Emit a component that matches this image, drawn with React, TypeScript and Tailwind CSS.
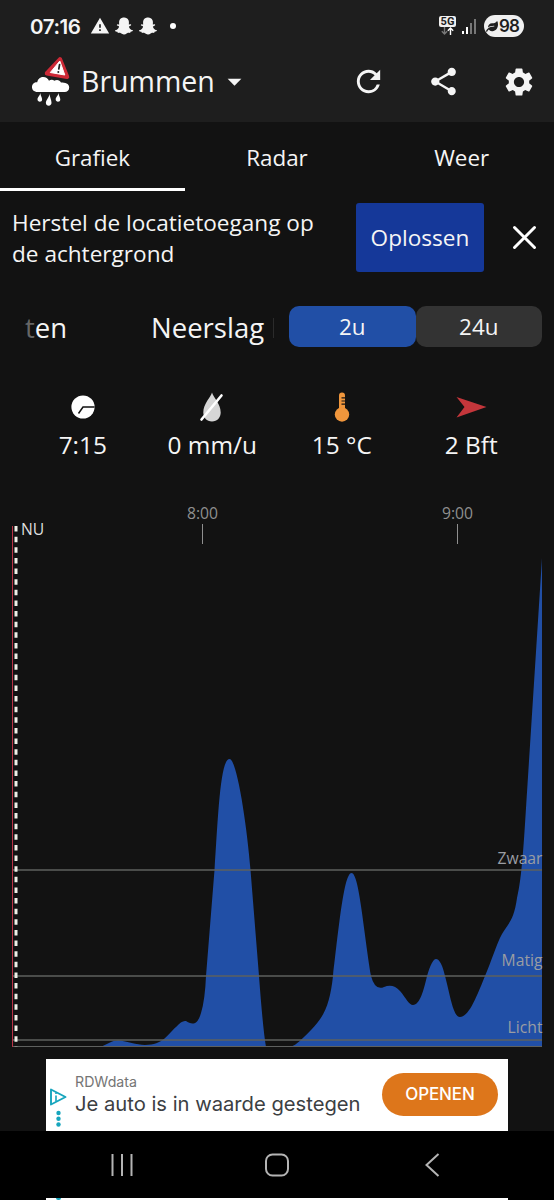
import { MdArrowDropDown, MdRefresh, MdSettings, MdShare, MdWarning } from 'react-icons/md';
import { FaLeaf, FaSnapchatGhost } from 'react-icons/fa';

const tabs = ['Grafiek', 'Radar', 'Weer'];

const levels = [
  { label: 'Zwaar', y: 870, textY: 864 },
  { label: 'Matig', y: 976, textY: 966 },
  { label: 'Licht', y: 1040, textY: 1033 },
];

const hours = [
  { label: '8:00', x: 202.5 },
  { label: '9:00', x: 457.5 },
];

function StatusBar() {
  return (
    <div className="flex h-[52px] items-center justify-between px-[30px]">
      <div className="flex items-center">
        <span className="w-[60px] pt-[2px] font-['Inter'] text-[20.5px] font-semibold leading-none tracking-[-0.4px]">07:16</span>
        <MdWarning className="h-5 w-5" />
        <FaSnapchatGhost className="ml-[5px] h-[18px] w-[18px]" />
        <FaSnapchatGhost className="ml-[6px] h-[18px] w-[18px]" />
        <span className="ml-[13px] h-1.5 w-1.5 rounded-full bg-white" />
      </div>
      <div className="flex items-center">
        <div className="-mt-[2px] flex w-[17px] flex-col items-center">
          <span className="flex h-[11px] w-[17px] items-center justify-center rounded-[2px] bg-[#f0f0f0] font-['Roboto'] text-[11px] font-bold leading-none text-[#1e1e1e]">5G</span>
          <svg className="h-2 w-[13px]" viewBox="0 0 13 8" fill="none" strokeWidth="1.4">
            <path d="M3.500 0v7M.8 4.300l2.700 2.700 2.700-2.700" stroke="#777" />
            <path d="M9.500 8V1M6.800 3.700 9.500 1l2.700 2.700" stroke="#fff" />
          </svg>
        </div>
        <svg className="ml-[6px] h-4 w-[16px]" viewBox="0 0 16 16">
          <rect x="0" y="13" width="2" height="3" fill="#fff" />
          <rect x="4" y="9" width="2" height="7" fill="#fff" />
          <rect x="8" y="5" width="2" height="11" fill="#777" />
          <rect x="12" y="1" width="2" height="15" fill="#777" />
        </svg>
        <div className="ml-[6px] flex h-[22px] w-[40px] items-center rounded-full bg-[#f0f0f0] pl-[2px] text-[#1e1e1e]">
          <FaLeaf className="h-[11px] w-[12px]" />
          <span className="ml-[1px] font-['Inter'] text-[17px] font-semibold leading-none tracking-[-0.8px]">98</span>
        </div>
      </div>
    </div>
  );
}

function RainWarningIcon() {
  return (
    <svg className="h-[52px] w-[40px]" viewBox="0 0 40 52">
      <path
        d="M8 36C3.500 36 2 33.500 2 31c0-3 2.400-5 5.200-4.800C8 22.500 10.600 21 13.200 21c2.700 0 4.800 1.500 5.800 3.800 1.500-1.300 4-1.300 5.300 0 2.300-1.600 5.500-1 6.700 1.800 4 .2 8.200.8 8.200 4.900 0 2.800-2 4.500-4.500 4.500Z"
        fill="#fff"
      />
      <path d="M10.300 37c-.4 3-3 4.300-2.800 6.600.1 1.300 1 2.100 2.300 2.100s2.300-1 2.300-2.300c0-2-1.500-3.600-1.800-6.400ZM19.500 38c-.6 4-3.800 6-3.600 9 .1 1.700 1.300 2.700 2.800 2.700 1.700 0 2.800-1.200 2.800-2.900 0-3-1.500-5-2-8.800ZM28.500 37c-.4 3-3 4.300-2.800 6.600.1 1.300 1 2.100 2.300 2.100s2.300-1 2.300-2.300c0-2-1.500-3.600-1.800-6.400Z" fill="#fff" />
      <path d="m30 3.500 7 17.300-20-3.500Z" fill="#cc2936" stroke="#cc2936" strokeWidth="4.500" strokeLinejoin="round" />
      <path d="m29.800 5 5 14-14.500-2.500Z" fill="#fff" stroke="#fff" strokeWidth="1" strokeLinejoin="round" />
      <path d="m29.600 8.500-.8 4.500" stroke="#222" strokeWidth="1.700" strokeLinecap="round" />
      <circle cx="28.300" cy="16" r="1" fill="#222" />
    </svg>
  );
}

function Header() {
  return (
    <header className="h-[122px] bg-[#1e1e1e]">
      <StatusBar />
      <div className="flex h-[60px] items-center pl-[30px]">
        <RainWarningIcon />
        <h1 className="-mt-[1px] ml-[11px] w-[134px] text-[28.5px] leading-none">Brummen</h1>
        <MdArrowDropDown className="-mt-[2px] ml-[3px] h-[33px] w-[33px]" />
        <div className="-mt-[1px] ml-auto flex items-center pr-[18px]">
          <MdRefresh className="h-[35px] w-[35px]" />
          <MdShare className="ml-[41px] h-[33px] w-[33px]" />
          <MdSettings className="ml-[42px] h-[34px] w-[34px]" />
        </div>
      </div>
    </header>
  );
}

function Readings() {
  return (
    <div className="grid h-[114px] grid-cols-4 px-[18px] pt-[27px] text-center text-[24.400px] leading-[30px]">
      <div className="flex flex-col items-center gap-[7px]">
        <svg className="h-[32px] w-[32px]" viewBox="0 0 32 32">
          <circle cx="16" cy="16" r="11.600" fill="#fff" />
          <path d="M27.500 16H16l-4.500 6.500" fill="none" stroke="#121212" strokeWidth="1.500" />
        </svg>
        <span>7:15</span>
      </div>
      <div className="flex flex-col items-center gap-[7px]">
        <svg className="h-[32px] w-[32px]" viewBox="0 0 32 32">
          <path d="M16 1.500c1 4.500 8.700 11 8.700 20 0 5-3.400 9-8.700 9s-8.700-4-8.700-9c0-9 7.700-15.500 8.700-20Z" fill="#d6d6d6" />
          <path d="M5.500 28.500 25.500 4.500" stroke="#fff" strokeWidth="2.600" strokeLinecap="round" />
        </svg>
        <span>0 mm/u</span>
      </div>
      <div className="flex flex-col items-center gap-[7px]">
        <svg className="h-[32px] w-[32px]" viewBox="0 0 32 32">
          <path d="M13 18V4.500a3 3 0 0 1 6 0V18" fill="#f0963c" />
          <circle cx="16" cy="23.500" r="7.200" fill="#f0963c" />
          <path d="M15.500 6.800H19M15.500 10H19M15.500 13.200H19" stroke="#121212" strokeWidth="1.200" />
        </svg>
        <span>15 °C</span>
      </div>
      <div className="flex flex-col items-center gap-[7px]">
        <svg className="h-[32px] w-[32px]" viewBox="0 0 32 32">
          <path d="M1.500 6 31.500 16 1.500 26.500 9.500 16Z" fill="#c4363b" />
        </svg>
        <span>2 Bft</span>
      </div>
    </div>
  );
}

function RainChart() {
  return (
    <svg className="block h-[581px] w-[554px] font-['Open_Sans']" viewBox="0 478 554 581" fontSize="15.700">
      <path
        d="M101 1047C107 1044 112 1040.500 118 1040.500C128 1041 136 1045 145 1045C163 1045 168 1034 176 1027Q182 1020 186 1021C191 1024 197 1027 201 1013Q205 1000 206 976L214.500 870C218 820 220 759 229.500 759C237 759 247 826 250.500 870L259 976Q263 1030 266 1047Z"
        fill="#214fa6"
      />
      <path
        d="M290 1047C297 1045 303 1038 311 1030C325 1016 330 1003 333 976C339 926 344 873 351.500 873C359 873 363 926 371 976Q375 991 384 987Q393 983 400 991C406 998 409 1005 413 1005C420 1005 424 989 427 976Q432 959 436 959Q441 959 445 976C450 994 453 1017 460 1017C468 1017 475 1001 485 976C492 960 496 945 502 934C507 925 514 921 517 898C522 878 524 840 526.500 800L542 558V1047Z"
        fill="#214fa6"
      />
      {levels.map((level) => (
        <g key={level.label}>
          <line x1="13" x2="542" y1={level.y} y2={level.y} stroke="#5e605e" strokeWidth="1.600" />
          <text x="542.500" y={level.textY} textAnchor="end" fill="#9a9da3">{level.label}</text>
        </g>
      ))}
      <line x1="13" x2="542" y1="1046.500" y2="1046.500" stroke="#5e605e" strokeWidth="1.200" />
      {hours.map((hour) => (
        <g key={hour.label}>
          <text x={hour.x} y="519" textAnchor="middle" fill="#8f8f8f">{hour.label}</text>
          <line x1={hour.x} x2={hour.x} y1="524" y2="544" stroke="#8f8f8f" />
        </g>
      ))}
      <line x1="12.500" x2="12.500" y1="526" y2="1047" stroke="#b83246" />
      <line x1="16" x2="16" y1="526" y2="1047" stroke="#f0f0e8" strokeWidth="3" strokeDasharray="5.500 5.130" />
      <text x="21" y="535" fill="#dedede">NU</text>
    </svg>
  );
}

function AdBanner() {
  return (
    <div className="mx-[46px] flex h-[72px] w-[462px] bg-white font-['Inter']">
      <svg className="h-[72px] w-[29px]" viewBox="0 0 29 72" fill="none" stroke="#16a5bd">
        <path d="M5 30.500 19.500 38 5 45.500Z" strokeWidth="1.900" strokeLinejoin="round" />
        <path d="M10 36.500v6M10 33.500v1.500" strokeWidth="1.600" />
        <g fill="#16a5bd" stroke="none">
          <circle cx="12.500" cy="54" r="2.200" />
          <circle cx="12.500" cy="59.800" r="2.200" />
          <circle cx="12.500" cy="65.500" r="2.200" />
        </g>
      </svg>
      <div className="w-[307px] pt-[14px]">
        <div className="text-[14.200px] leading-[18px] text-[#757575]">RDWdata</div>
        <div className="whitespace-nowrap text-[20.200px] leading-[26px] text-[#3c4043]">Je auto is in waarde gestegen</div>
      </div>
      <button className="mt-[14px] h-[43px] w-[116px] rounded-full bg-[#dd761b] text-[17px] font-medium tracking-[-0.1px] text-white">OPENEN</button>
    </div>
  );
}

function NavBar() {
  return (
    <nav className="h-[69px] bg-black">
      <svg className="h-[67px] w-[554px]" viewBox="0 0 554 67" fill="none" stroke="#b4b4b4" strokeWidth="2">
        <path d="M112.500 23v22M122 23v22M131.500 23v22" />
        <rect x="266" y="23.500" width="22" height="21" rx="6.500" />
        <path d="M438.500 23 426.500 34l12 11" />
      </svg>
      <div className="mx-[46px] h-[2px] bg-white">
        <div className="ml-[10px] h-[2px] w-[5px] rounded-b-full bg-[#16a5bd]" />
      </div>
    </nav>
  );
}

export default function App() {
  return (
    <div className="h-[1200px] w-[554px] overflow-hidden bg-[#121212] font-['Open_Sans',sans-serif] text-[#f5f5f5]">
      <Header />

      <div className="grid h-[69px] grid-cols-3">
        {tabs.map((tab, index) => (
          <button
            key={tab}
            className={`border-b-[3px] pt-[6px] text-[22.4px] leading-[30px] ${index === 0 ? 'border-white' : 'border-transparent'}`}
          >
            {tab}
          </button>
        ))}
      </div>

      {/* Location permission notice */}
      <div className="flex h-[97px] items-start pl-[12px] pt-[12px]">
        <p className="w-[344px] pt-[4px] text-[22.600px] leading-[31px]">
          Herstel de locatietoegang op
          <br />
          de achtergrond
        </p>
        <button className="h-[69px] w-[128px] rounded-[3px] bg-[#153899] pt-[1px] text-[22.600px]">Oplossen</button>
        <svg className="ml-[28px] mt-[22px] h-[25px] w-[25px]" viewBox="0 0 25 25" stroke="#fff" strokeWidth="3" strokeLinecap="round">
          <path d="m2.500 2.500 20 20M22.500 2.500l-20 20" />
        </svg>
      </div>

      {/* Scrolling headline and range toggle */}
      <div className="flex h-[76px] items-start pt-[18px]">
        <div className="flex h-[42px] w-[289px] items-center whitespace-nowrap pl-[25px] pt-[1px] text-[27.500px] leading-none">
          <span className="w-[126px]">
            <span className="text-[#666]">t</span>en
          </span>
          <span>Neerslag</span>
          <span className="ml-[9px] h-5 w-px bg-[#2b2b2b]" />
        </div>
        <button className="h-[41px] w-[126.500px] rounded-[10px] bg-[#214fa6] text-[22.400px]">2u</button>
        <button className="h-[41px] w-[126.500px] rounded-[10px] bg-[#333] text-[22.400px]">24u</button>
      </div>

      <Readings />
      <RainChart />
      <AdBanner />
      <NavBar />
    </div>
  );
}
